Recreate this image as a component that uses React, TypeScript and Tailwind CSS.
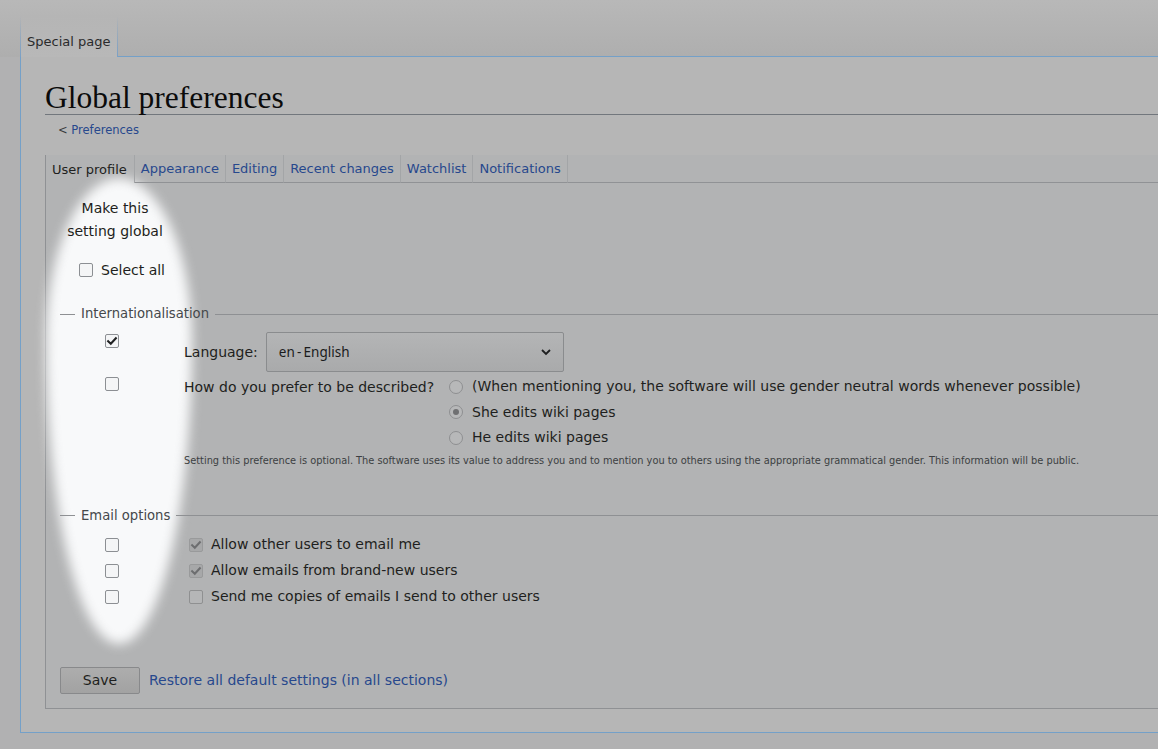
import React from "react";

const CheckMark = ({ color }: { color: string }) => (
  <svg viewBox="0 0 14 14" width="12" height="12">
    <path d="M2.5 7.2 L5.6 10.2 L11.5 3.8" stroke={color} strokeWidth="2.4" fill="none" strokeLinecap="square" />
  </svg>
);

const Box = ({ checked, variant }: { checked?: boolean; variant: "light" | "grey" }) => {
  if (variant === "grey") {
    return (
      <span
        className={
          checked
            ? "w-[14px] h-[14px] rounded-[2px] border border-[#999a9b] bg-[#a7a8a9] flex items-center justify-center shrink-0"
            : "w-[14px] h-[14px] rounded-[2px] border border-[#8f9091] bg-[#b5b6b7] flex items-center justify-center shrink-0"
        }
      >
        {checked ? <CheckMark color="#6d6e70" /> : null}
      </span>
    );
  }
  return (
    <span className="w-[14px] h-[14px] rounded-[2px] border border-[#8c8f93] bg-[#f4f5f6] flex items-center justify-center shrink-0">
      {checked ? <CheckMark color="#202122" /> : null}
    </span>
  );
};

const Radio = ({ checked }: { checked?: boolean }) => (
  <span className="w-[14px] h-[14px] rounded-full border border-[#8e8f91] bg-[#b7b8b9] flex items-center justify-center shrink-0">
    {checked ? <span className="w-[6px] h-[6px] rounded-full bg-[#6f7072]" /> : null}
  </span>
);

const Legend = ({ label }: { label: string }) => (
  <div className="flex items-center h-[20px] ml-[14px]">
    <div className="w-[15px] h-px bg-[#8e9093]" />
    <div className="px-[6px] text-[13.2px] leading-[20px] text-[#45484b]">{label}</div>
    <div className="flex-1 h-px bg-[#8e9093]" />
  </div>
);

export default function App() {
  const tabs = ["Appearance", "Editing", "Recent changes", "Watchlist", "Notifications"];
  return (
    <div className="w-[1158px] h-[749px] overflow-hidden bg-[#b1b1b2] font-['DejaVu_Sans',sans-serif] text-[#1e1f20]">
      <div className="w-[1300px]">
        {/* header */}
        <div className="h-[57px] flex items-end bg-gradient-to-b from-[#b8b8b8] to-[#aeaeae]">
          <div className="w-[20px]" />
          <div className="w-px h-[41px] bg-gradient-to-b from-transparent to-[#7aa0c6]" />
          <div className="w-[96px] h-[41px] flex items-end pb-[7px] pl-[6px] bg-gradient-to-b from-[#b5b5b5] to-[#b8b8b8] text-[13px] leading-[16px] text-[#2a2b2c]">
            Special page
          </div>
          <div className="w-px h-[41px] bg-gradient-to-b from-transparent to-[#7aa0c6]" />
          <div className="flex-1 h-px bg-[#74a0c8]" />
        </div>

        {/* content */}
        <div className="ml-[20px] border-l border-b border-[#74a0c8] bg-[#b6b6b6] pl-[24px] pt-[24px] pb-[23px]">
          <h1 className="font-['Liberation_Serif',serif] text-[31.5px] leading-[33px] text-[#0b0b0b] border-b border-[#72777d]">
            Global preferences
          </h1>
          <div className="ml-[13px] mt-[7px] text-[11.5px] leading-[16px]">
            <span className="text-[#3a3c3e]">&lt; </span>
            <span className="text-[#27488d]">Preferences</span>
          </div>

          {/* panel */}
          <div className="relative isolate mt-[17px] border-l border-b border-[#8f9194] bg-[#b2b3b4] pb-[14px]">
            <div className="absolute -z-10 left-0 top-[23px] w-[146px] h-[466px] bg-[#f8f9fa] blur-[6px] rounded-[50%_50%_50%_50%/35%_35%_65%_65%]" />

            <div className="flex h-[28px] text-[13px]">
              <div className="pl-[6px] pr-[7px] pt-[1px] border-r border-[#a3a5a7] flex items-center text-[#1e1f20]">User profile</div>
              {tabs.map((t) => (
                <div key={t} className="px-[6px] pt-[1px] border-r border-b border-r-[#a3a5a7] border-b-[#909295] flex items-center text-[#27488d]">
                  {t}
                </div>
              ))}
              <div className="flex-1 border-b border-[#909295]" />
            </div>

            <div className="w-[138px] text-center pt-[14px] text-[14px] leading-[23px]">
              Make this
              <br />
              setting global
            </div>

            <div className="flex items-center h-[20px] mt-[17px] pl-[33px] gap-[8px] text-[14px]">
              <Box variant="light" />
              <span>Select all</span>
            </div>

            <div className="mt-[24px]">
              <Legend label="Internationalisation" />
            </div>

            <div className="flex mt-[8px] text-[14px]">
              <div className="w-[138px] pl-[59px] pt-[2px]">
                <Box variant="light" checked />
              </div>
              <div className="flex items-center gap-[8px]">
                <span>Language:</span>
                <div className="w-[298px] h-[40px] rounded-[2px] border border-[#8a8c8e] bg-gradient-to-b from-[#b4b5b6] to-[#a9aaab] flex items-center justify-between pl-[12px] pr-[11px]">
                  <span className="text-[#1a1b1c] font-['Noto_Sans',sans-serif] text-[13.5px]">en&#8201;-&#8201;English</span>
                  <svg width="12" height="8" viewBox="0 0 12 8">
                    <path d="M2 2 L6 6 L10 2" stroke="#1e1f20" strokeWidth="1.8" fill="none" />
                  </svg>
                </div>
              </div>
            </div>

            <div className="flex pt-[2px] text-[14px]">
              <div className="w-[138px] pl-[59px] pt-[3px]">
                <Box variant="light" />
              </div>
              <div className="flex">
                <div className="w-[265px] h-[26px] flex items-center">How do you prefer to be described?</div>
                <div className="flex flex-col">
                  {[
                    ["(When mentioning you, the software will use gender neutral words whenever possible)", false],
                    ["She edits wiki pages", true],
                    ["He edits wiki pages", false],
                  ].map(([label, c]) => (
                    <div key={label as string} className="h-[25.5px] flex items-center gap-[9px]">
                      <Radio checked={c as boolean} />
                      <span>{label as string}</span>
                    </div>
                  ))}
                </div>
              </div>
            </div>

            <div className="pl-[138px] mt-[3px] text-[10.9px] leading-[14px] text-[#3c3f42] font-['DejaVu_Sans_Condensed','DejaVu_Sans',sans-serif]">
              Setting this preference is optional. The software uses its value to address you and to mention you to others using the appropriate grammatical gender. This information will be public.
            </div>

            <div className="mt-[38px]">
              <Legend label="Email options" />
            </div>

            <div className="mt-[6px] text-[14px]">
              {[
                ["Allow other users to email me", true],
                ["Allow emails from brand-new users", true],
                ["Send me copies of emails I send to other users", false],
              ].map(([label, c]) => (
                <div key={label as string} className="h-[26px] flex items-center">
                  <div className="w-[138px] pl-[59px] flex">
                    <Box variant="light" />
                  </div>
                  <div className="ml-[5px] flex items-center gap-[8px]">
                    <Box variant="grey" checked={c as boolean} />
                    <span>{label as string}</span>
                  </div>
                </div>
              ))}
            </div>

            <div className="mt-[57px] pl-[14px] flex items-center gap-[9px] text-[14px]">
              <div className="w-[80px] h-[27px] rounded-[2px] border border-[#88898b] bg-gradient-to-b from-[#adadad] to-[#a2a2a2] flex items-center justify-center text-[#1e1f20]">
                Save
              </div>
              <span className="text-[#27488d]">Restore all default settings (in all sections)</span>
            </div>
          </div>
        </div>
      </div>
    </div>
  );
}
